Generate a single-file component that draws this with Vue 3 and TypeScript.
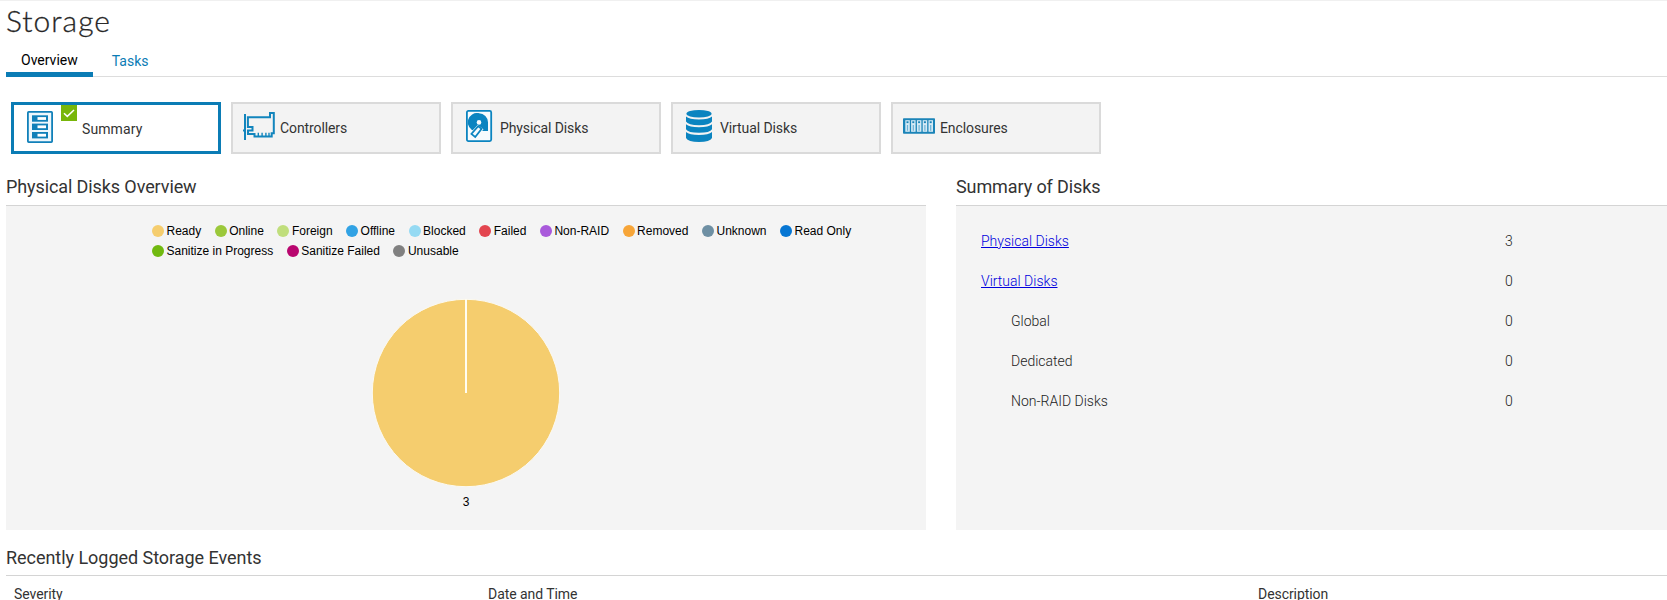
<script setup lang="ts">
interface Card { id: string; label: string }
interface LegendItem { label: string; color: string }
interface SummaryRow { label: string; value: number; link?: boolean }

const cards: Card[] = [
  { id: 'summary', label: 'Summary' },
  { id: 'controllers', label: 'Controllers' },
  { id: 'physical', label: 'Physical Disks' },
  { id: 'virtual', label: 'Virtual Disks' },
  { id: 'enclosures', label: 'Enclosures' },
]
const selected = 'summary'

const legend: LegendItem[] = [
  { label: 'Ready', color: '#f5cd6e' },
  { label: 'Online', color: '#9bc83a' },
  { label: 'Foreign', color: '#c0de7c' },
  { label: 'Offline', color: '#31a2e4' },
  { label: 'Blocked', color: '#95daf3' },
  { label: 'Failed', color: '#e3454f' },
  { label: 'Non-RAID', color: '#a95adb' },
  { label: 'Removed', color: '#f7a538' },
  { label: 'Unknown', color: '#6e8fa3' },
  { label: 'Read Only', color: '#0676d3' },
  { label: 'Sanitize in Progress', color: '#70b90f' },
  { label: 'Sanitize Failed', color: '#b9066f' },
  { label: 'Unusable', color: '#808080' },
]

const rows: SummaryRow[] = [
  { label: 'Physical Disks', value: 3, link: true },
  { label: 'Virtual Disks', value: 0, link: true },
  { label: 'Global', value: 0 },
  { label: 'Dedicated', value: 0 },
  { label: 'Non-RAID Disks', value: 0 },
]
</script>

<template>
  <main class="page">
    <h1 class="title">Storage</h1>
    <nav class="tabs">
      <a class="tab active">Overview</a>
      <a class="tab">Tasks</a>
    </nav>

    <div class="cards">
      <button v-for="c in cards" :key="c.id" class="card" :class="{ selected: c.id === selected }">
        <svg v-if="c.id === 'summary'" class="icon server" width="26" height="32" viewBox="0 0 26 32">
          <rect x=".9" y=".9" width="24.2" height="30.2" rx=".8" fill="#eef7fc" stroke="#1180b9" stroke-width="1.8" />
          <g v-for="y in [4.3, 12.6, 21]" :key="y">
            <rect x="5" :y="y" width="16" height="6.4" fill="#1180b9" />
            <rect x="10.5" :y="y + 1.8" width="8.5" height="2.8" fill="#fff" />
          </g>
        </svg>
        <svg v-else-if="c.id === 'controllers'" class="icon" width="32" height="32" viewBox="0 0 32 32" fill="none" stroke="#1285bd" stroke-width="2">
          <path d="M2 4v26M0 20.5h2" />
          <path d="M4.9 7.2H27V3h3.8v20.3h-2.1v3.3H11.5V24H5v-3.5h4.5v-3.6H4.9z" />
          <path d="M15.3 22.8v3.4M19.1 22.8v3.4M22.9 22.8v3.4M26 22.8v3.4" stroke-width="1.4" />
        </svg>
        <svg v-else-if="c.id === 'physical'" class="icon" width="32" height="32" viewBox="0 0 32 32">
          <rect x="3.9" y=".9" width="24.3" height="30.2" rx="1.5" fill="#f7fbfd" stroke="#0b84c0" stroke-width="1.8" />
          <path d="M16 3.3a9 9 0 0 1 9 9V21H11.8A9 9 0 0 1 16 3.3z" fill="#0b84c0" />
          <path d="M16 3.300a9 9 0 0 0-6.400 15.400l4.400-2z" fill="#0b84c0" />
          <path d="M14.800 16.500l4 2.900-6.400 8.200-4.600-3.500z" fill="#f7fbfd" stroke="#f7fbfd" stroke-width="2.400" />
          <path d="M15.200 16.200l3.400 2.600-6.400 8.200-3.800-3z" fill="#f7fbfd" stroke="#0b84c0" stroke-width="1.700" />
          <circle cx="16" cy="12.400" r="2.300" fill="#f7fbfd" />
        </svg>
        <svg v-else-if="c.id === 'virtual'" class="icon" width="32" height="32" viewBox="0 0 32 32" fill="#0b84c0">
          <ellipse cx="16" cy="3.8" rx="12.6" ry="3.8" />
          <path d="M3 6.4q3.2 3 13 3t13-3v5.2q-2 3.600-13 3.600T3 11.600z" />
          <path d="M3 14.300q3.200 2.900 13 2.900t13-2.900v4.900q-2 3.600-13 3.600T3 19.200z" />
          <path d="M3 22.100q3.200 2.900 13 2.900t13-2.900v5.900q-2 4-13 4T3 28z" />
        </svg>
        <svg v-else class="icon" width="32" height="32" viewBox="0 0 32 32">
          <rect y="8.200" width="32" height="15.600" rx=".8" fill="#1b84b8" />
          <g v-for="x in [2.3, 8.1, 13.9, 19.7, 25.5]" :key="x">
            <rect :x="x" y="10.200" width="4.500" height="11.600" fill="#d5eaf5" />
            <rect :x="x + 1.2" y="11.300" width="2" height="1.800" fill="#1b84b8" />
            <rect :x="x + 1.6" y="15" width="1.200" height="5.800" fill="#6db2d6" />
          </g>
        </svg>
        <svg v-if="c.id === selected" class="badge" width="16" height="16" viewBox="0 0 16 16">
          <rect width="16" height="16" fill="#78b60a" />
          <path d="M3 8.200l3.300 3.200L13 5" fill="none" stroke="#fff" stroke-width="1.500" />
        </svg>
        <span class="card-label">{{ c.label }}</span>
      </button>
    </div>

    <div class="panels">
      <section>
        <h2>Physical Disks Overview</h2>
        <div class="panel chart">
          <ul class="legend">
            <li v-for="l in legend" :key="l.label">
              <svg width="12" height="12" viewBox="0 0 12 12"><circle cx="6" cy="6" r="6" :fill="l.color" /></svg>
              <span>{{ l.label }}</span>
            </li>
          </ul>
          <svg class="pie" width="190" height="190" viewBox="0 0 190 190">
            <circle cx="95" cy="95" r="93.700" fill="#f5cd6e" stroke="#fcfaf2" stroke-width="1" />
            <path d="M95 1V95" stroke="#fffdf2" stroke-width="2" />
          </svg>
          <div class="pie-value">3</div>
        </div>
      </section>
      <section>
        <h2>Summary of Disks</h2>
        <div class="panel summary">
          <div v-for="r in rows" :key="r.label" class="row">
            <span class="name" :class="{ sub: !r.link }">
              <a v-if="r.link" href="#">{{ r.label }}</a>
              <template v-else>{{ r.label }}</template>
            </span>
            <span>{{ r.value }}</span>
          </div>
        </div>
      </section>
    </div>

    <section class="events">
      <h2>Recently Logged Storage Events</h2>
      <div class="event-head">
        <span>Severity</span>
        <span>Date and Time</span>
        <span>Description</span>
      </div>
    </section>
  </main>
</template>

<style>
body { margin: 0; background: #fff; }
</style>

<style scoped>
.page {
  box-sizing: border-box;
  height: 600px;
  overflow: hidden;
  padding-left: 6px;
  border-top: 1px solid #f0f0f0;
  font: 400 14px Roboto, "Liberation Sans", sans-serif;
  color: #333;
}
.title {
  margin: 0;
  height: 37px;
  font: 300 30px/38px Lato, sans-serif;
  letter-spacing: 1px;
  color: #222;
  -webkit-text-stroke: 0.3px #333;
}
.tabs {
  box-sizing: border-box;
  display: flex;
  align-items: flex-start;
  height: 39px;
  padding-top: 10px;
  background: linear-gradient(#ddd, #ddd) 0 100% / 100% 1px no-repeat;
}
.tab {
  line-height: 24px;
  padding: 1px 18px 0 19px;
  color: #0b7cb5;
}
.tab.active {
  padding: 0 15px;
  color: #000;
  border-bottom: 5px solid #0b7cb5;
}
.cards {
  display: flex;
  gap: 10px;
  margin: 25px 0 0 5px;
}
.card {
  box-sizing: border-box;
  display: flex;
  align-items: center;
  position: relative;
  width: 210px;
  height: 52px;
  margin: 0;
  padding: 0 0 0 10px;
  border: 2px solid #dadada;
  background: #f3f3f3;
  font: inherit;
  color: #333;
  text-align: left;
}
.card.selected {
  border: 3px solid #0b7cb5;
  background: #fff;
  padding-left: 13px;
}
.icon { flex: none; margin-right: 5px; margin-top: -4px; }
.icon.server { margin-right: 29px; margin-top: -2px; }
.badge { position: absolute; left: 47px; top: 0; }
.card-label { letter-spacing: -0.1px; line-height: 20px; }
.selected .card-label { letter-spacing: 0.1px; padding-top: 2px; }
.panels {
  display: grid;
  grid-template-columns: 920px 1fr;
  gap: 30px;
  margin-top: 14px;
}
h2 {
  margin: 0;
  height: 37px;
  font-size: 18px;
  line-height: 38px;
  font-weight: 400;
  letter-spacing: -0.1px;
  color: #333;
}
.panel {
  box-sizing: border-box;
  height: 325px;
  border-top: 1px solid #d4d4d4;
  background: #f4f4f4;
}
.chart {
  display: flex;
  flex-direction: column;
  align-items: center;
  font: 12px "Liberation Sans", Arial, sans-serif;
  color: #000;
}
.legend {
  align-self: flex-start;
  display: flex;
  flex-wrap: wrap;
  width: 720px;
  margin: 15px 0 0 146px;
  padding: 0;
  list-style: none;
}
.legend li {
  display: flex;
  align-items: center;
  gap: 2.5px;
  height: 20px;
  margin-right: 13.5px;
}
.pie { margin-top: 37px; }
.pie-value { line-height: 16px; margin-top: 6px; }
.summary {
  padding-top: 15px;
  font-weight: 300;
  color: #222;
}
.row {
  display: grid;
  grid-template-columns: 549px 1fr;
  line-height: 40px;
}
.name { padding-left: 25px; }
.name.sub { padding-left: 55px; }
.name a { color: #00d; }
.events { margin-top: 8px; }
.events h2 { letter-spacing: -0.04px; line-height: 40px; border-bottom: 1px solid #d4d4d4; }
.event-head {
  display: grid;
  grid-template-columns: 474px 770px 1fr;
  padding-left: 8px;
  line-height: 36px;
  letter-spacing: -0.06px;
}
</style>
